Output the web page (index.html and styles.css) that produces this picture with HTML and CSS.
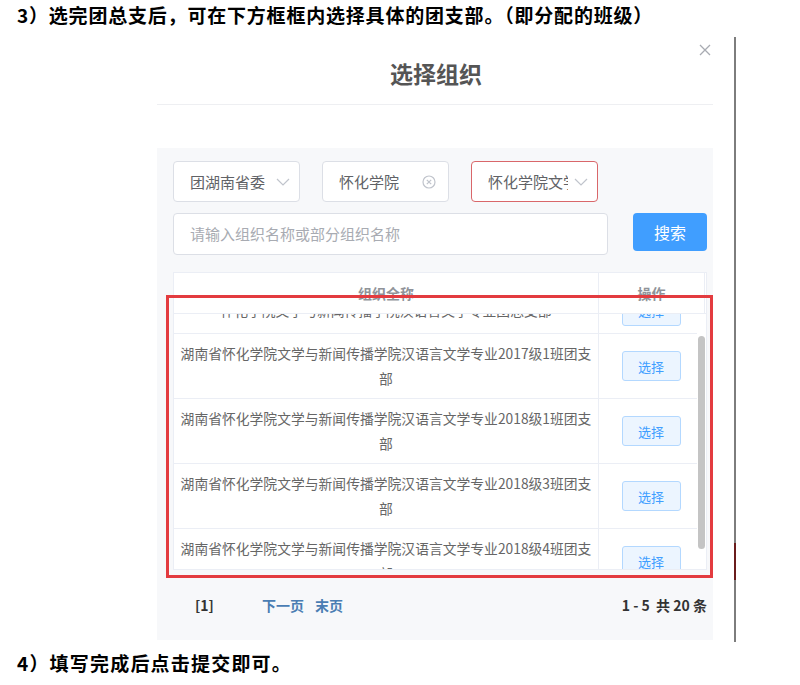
FILE: index.html
```html
<!DOCTYPE html>
<html lang="zh-CN">
<head>
<meta charset="utf-8">
<title>选择组织</title>
<link rel="stylesheet" href="styles.css">
</head>
<body>
<p class="step step-top">3）选完团总支后，可在下方框框内选择具体的团支部。（即分配的班级）</p>
<div class="stage">
  <div class="modal">
    <div class="modal-head">
      <h2 class="modal-title">选择组织</h2>
      <span class="close"><svg width="12" height="12" viewBox="0 0 12 12"><path d="M1 1L11 11M11 1L1 11" stroke="#a8abb2" stroke-width="1.3" fill="none"/></svg></span>
    </div>
    <div class="panel">
      <div class="filters">
        <div class="select">
          <span class="select-text">团湖南省委</span>
          <svg class="chev" width="14" height="8" viewBox="0 0 14 8"><polyline points="1,1 7,7 13,1" fill="none" stroke="#c0c4cc" stroke-width="1.2"/></svg>
        </div>
        <div class="select">
          <span class="select-text">怀化学院</span>
          <svg class="clear" width="14" height="14" viewBox="0 0 14 14"><circle cx="7" cy="7" r="6" fill="none" stroke="#c0c4cc" stroke-width="1.2"/><path d="M4.8 4.8L9.2 9.2M9.2 4.8L4.8 9.2" stroke="#c0c4cc" stroke-width="1.2"/></svg>
        </div>
        <div class="select select-active">
          <span class="select-text">怀化学院文学与新闻传播学院</span>
          <svg class="chev" width="14" height="8" viewBox="0 0 14 8"><polyline points="1,1 7,7 13,1" fill="none" stroke="#c0c4cc" stroke-width="1.2"/></svg>
        </div>
      </div>
      <div class="search">
        <div class="input">请输入组织名称或部分组织名称</div>
        <button class="btn-primary">搜索</button>
      </div>
      <div class="table">
        <div class="thead">
          <div class="th th-name">组织全称</div>
          <div class="th th-op">操作</div>
          <div class="th th-gutter"></div>
        </div>
        <div class="tbody">
          <div class="rows">
            <div class="row row-short">
              <div class="cell-name">怀化学院文学与新闻传播学院汉语言文学专业团总支部</div>
              <div class="cell-op"><button class="btn-pick">选择</button></div>
            </div>
            <div class="row">
              <div class="cell-name">湖南省怀化学院文学与新闻传播学院汉语言文学专业2017级1班团支部</div>
              <div class="cell-op"><button class="btn-pick">选择</button></div>
            </div>
            <div class="row">
              <div class="cell-name">湖南省怀化学院文学与新闻传播学院汉语言文学专业2018级1班团支部</div>
              <div class="cell-op"><button class="btn-pick">选择</button></div>
            </div>
            <div class="row">
              <div class="cell-name">湖南省怀化学院文学与新闻传播学院汉语言文学专业2018级3班团支部</div>
              <div class="cell-op"><button class="btn-pick">选择</button></div>
            </div>
            <div class="row">
              <div class="cell-name">湖南省怀化学院文学与新闻传播学院汉语言文学专业2018级4班团支部</div>
              <div class="cell-op"><button class="btn-pick">选择</button></div>
            </div>
          </div>
          <div class="scrollbar"></div>
        </div>
      </div>
      <div class="pager">
        <span class="page-cur">[1]</span>
        <span class="page-links"><a class="page-link">下一页</a><a class="page-link">末页</a></span>
        <span class="page-total">1 - 5 &nbsp;共 20 条</span>
      </div>
      <div class="highlight"></div>
    </div>
  </div>
  <div class="vline"></div>
</div>
<p class="step step-bottom">4）填写完成后点击提交即可。</p>
</body>
</html>
```
FILE: styles.css
```css
* { box-sizing: border-box; }
html, body { margin: 0; padding: 0; background: #fff; }
body {
  font-family: "Noto Sans CJK SC", "Noto Sans", "Liberation Sans", sans-serif;
  color: #333;
  width: 800px;
  height: 685px;
  overflow: hidden;
}
.step {
  margin: 0;
  padding-left: 17px;
  font-size: 19px;
  line-height: 26px;
  font-weight: 700;
  color: #000;
  white-space: nowrap;
  letter-spacing: 0.8px;
}
.step-top { margin-top: 2px; }
.step-bottom { margin-top: 8px; letter-spacing: 1.2px; }

.stage {
  display: flex;
  margin-top: 9px;
  height: 605px;
}
.modal {
  width: 556px;
  margin-left: 157px;
  background: #fff;
}
.modal-head {
  position: relative;
  height: 68px;
  padding-top: 21px;
  border-bottom: 1px solid #eeeff2;
  margin-bottom: 43px;
}
.modal-title {
  margin: 0;
  text-align: center;
  font-size: 23px;
  line-height: 30px;
  font-weight: 700;
  color: #555;
  padding-left: 2px;
}
.close {
  position: absolute;
  right: 2px;
  top: 7px;
  width: 12px;
  height: 12px;
  display: block;
}
.close svg { display: block; }

.panel {
  position: relative;
  height: 492px;
  background: #f7f8fa;
  padding: 13px 6px 0 16px;
}
.filters {
  display: flex;
  gap: 22px;
  height: 41px;
}
.select {
  width: 127px;
  height: 41px;
  background: #fff;
  border: 1px solid #dcdfe6;
  border-radius: 4px;
  display: flex;
  align-items: center;
  padding: 0 9px 0 16px;
}
.select-active { border-color: #d9676a; }
.select-text {
  flex: 1;
  min-width: 0;
  overflow: hidden;
  white-space: nowrap;
  font-size: 15px;
  color: #606266;
}
.chev { flex: none; margin-left: 6px; display: block; }
.clear { flex: none; margin-right: 3px; display: block; }

.search {
  display: flex;
  align-items: flex-start;
  margin-top: 11px;
}
.input {
  width: 435px;
  height: 42px;
  background: #fff;
  border: 1px solid #dcdfe6;
  border-radius: 4px;
  padding-left: 16px;
  font-size: 15px;
  line-height: 40px;
  color: #a8abb2;
}
.btn-primary {
  margin-left: 25px;
  width: 74px;
  height: 38px;
  border: none;
  border-radius: 4px;
  background: #409eff;
  color: #fff;
  font-family: inherit;
  font-size: 16px;
  padding: 0;
}

.table {
  margin-top: 17px;
  width: 534px;
  height: 298px;
  background: #fff;
  border: 1px solid #ebeef5;
}
.thead {
  display: flex;
  height: 41px;
  border-bottom: 1px solid #ebeef5;
}
.th {
  font-size: 14px;
  font-weight: 700;
  color: #909399;
  text-align: center;
  line-height: 40px;
}
.th-name { width: 424px; }
.th-op { width: 106px; border-left: 1px solid #ebeef5; }
.th-gutter { width: 2px; border-left: 1px solid #ebeef5; }

.tbody {
  position: relative;
  height: 255px;
  overflow: hidden;
}
.rows { margin-top: -26px; }
.row {
  display: flex;
  width: 523px;
  border-bottom: 1px solid #ebeef5;
  min-height: 46px;
}
.cell-name {
  width: 424px;
  padding: 7px 4px;
  font-size: 13.8px;
  line-height: 25px;
  color: #666;
  text-align: center;
}
.row-short .cell-name { padding-top: 10px; padding-bottom: 10px; white-space: nowrap; }
.cell-op {
  width: 99px;
  border-left: 1px solid #ebeef5;
  display: flex;
  align-items: center;
  justify-content: center;
  padding-left: 6px;
}
.btn-pick {
  width: 59px;
  height: 30px;
  padding: 0;
  background: #ecf5ff;
  border: 1px solid #b3d8ff;
  border-radius: 3px;
  color: #409eff;
  font-family: inherit;
  font-size: 13px;
}
.scrollbar {
  position: absolute;
  right: 1px;
  top: 22px;
  width: 7px;
  height: 213px;
  border-radius: 4px;
  background: #c4c4c4;
}

.pager {
  display: flex;
  align-items: center;
  height: 70px;
  padding-left: 22px;
  font-size: 14px;
  font-weight: 700;
}
.page-cur { color: #333; width: 67px; }
.page-links { display: flex; gap: 11px; }
.page-link { color: #4a7db3; text-decoration: none; }
.page-total { margin-left: auto; color: #333; }

.highlight {
  position: absolute;
  left: 9px;
  top: 147px;
  width: 547px;
  height: 283px;
  border: 3px solid #e33b3f;
  pointer-events: none;
}

.vline {
  width: 2px;
  margin-left: 21px;
  height: 605px;
  background: linear-gradient(to bottom, #7d7d7d 0, #7d7d7d 506px, #6a1c1c 506px, #6a1c1c 543px, #7d7d7d 543px);
}
```
